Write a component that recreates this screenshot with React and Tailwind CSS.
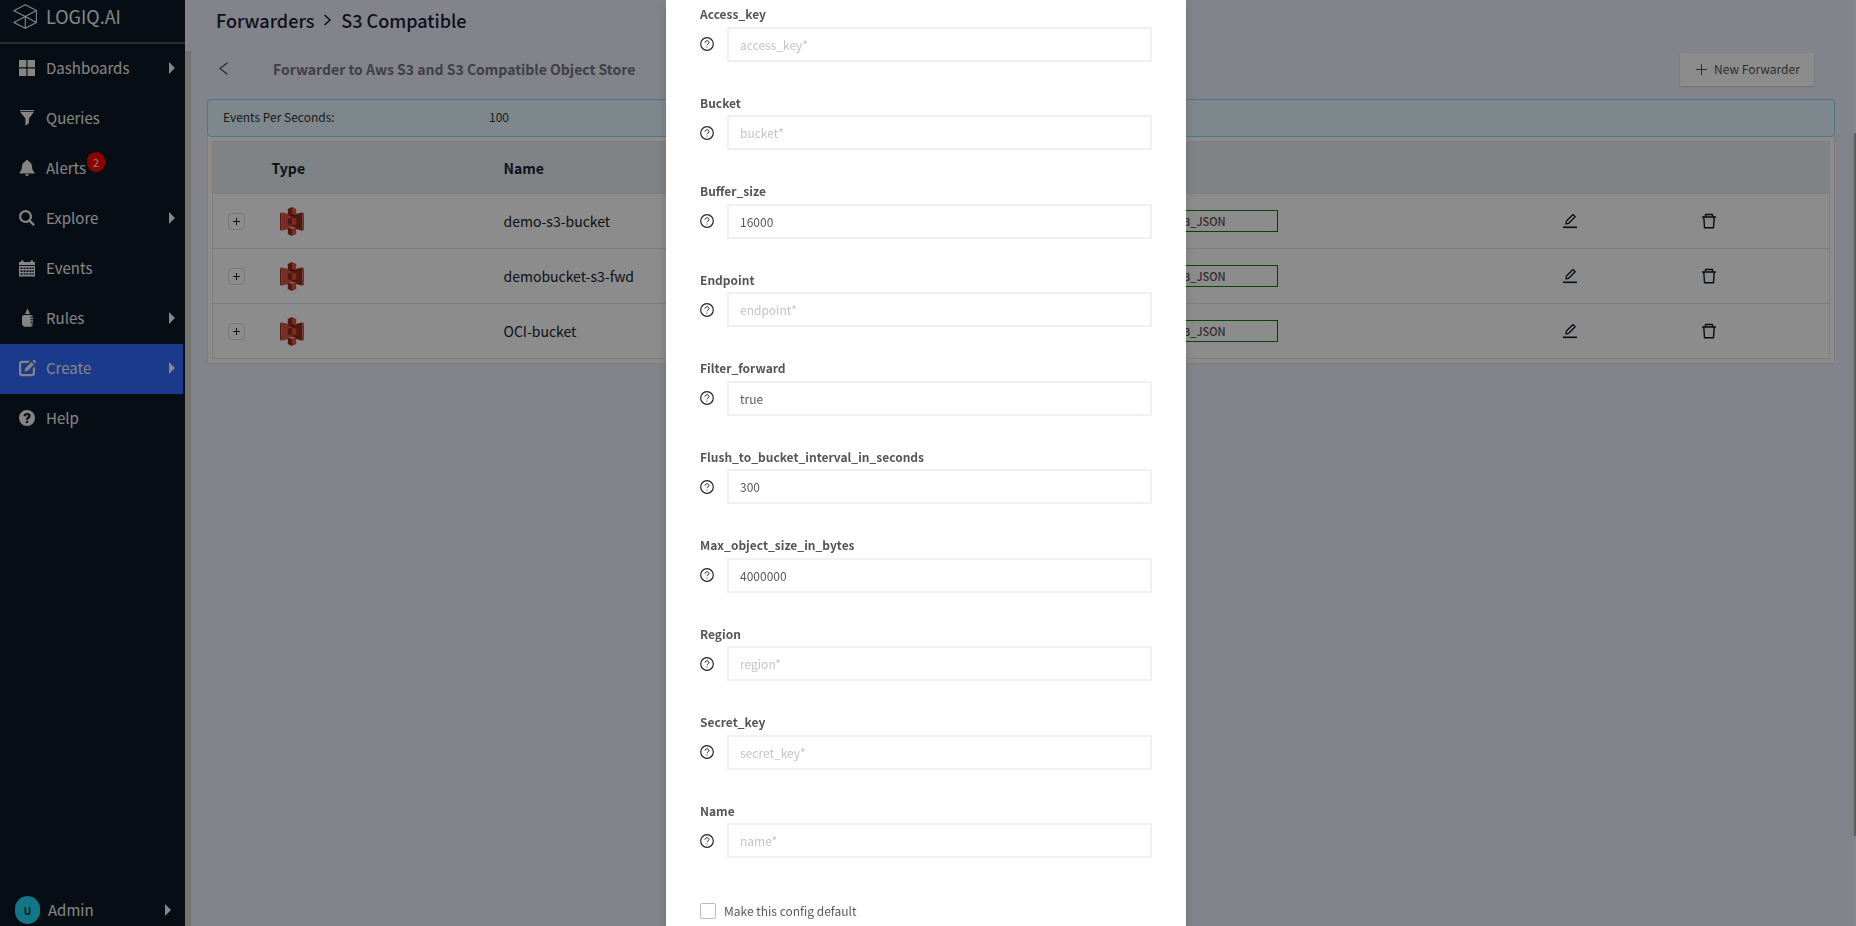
import React from "react";

const navItems = [
  { label: "Dashboards", icon: "grid", caret: true },
  { label: "Queries", icon: "funnel" },
  { label: "Alerts", icon: "bell", badge: 2 },
  { label: "Explore", icon: "search", caret: true },
  { label: "Events", icon: "calendar" },
  { label: "Rules", icon: "bottle", caret: true },
  { label: "Create", icon: "edit", caret: true, active: true },
  { label: "Help", icon: "help" },
];

const rows = ["demo-s3-bucket", "demobucket-s3-fwd", "OCI-bucket"];

const fields = [
  { name: "access_key" },
  { name: "bucket" },
  { name: "buffer_size", value: "16000" },
  { name: "endpoint" },
  { name: "filter_forward", value: "true" },
  { name: "flush_to_bucket_interval_in_seconds", value: "300" },
  { name: "max_object_size_in_bytes", value: "4000000" },
  { name: "region" },
  { name: "secret_key" },
  { name: "name" },
];

const glyphs = {
  grid: (
    <path d="M0 0h7.3v7.3H0zM8.5 0H16v7.3H8.5zM0 8.5h7.3V16H0zM8.5 8.5H16V16H8.5z" />
  ),
  funnel: (
    <>
      <path d="M1 0h14v1.2H1z" />
      <path d="M1.2 2h13.6L10 8.6V13l-3.6 3V8.6z" />
    </>
  ),
  bell: (
    <path d="M8 0c.8 0 1.3.6 1.3 1.3C11.8 2 12.8 4 13 6.5c.2 3 .9 4.500 2.500 6v1H.5v-1C2 11 2.800 9.500 3 6.500 3.200 4 4.300 2 6.700 1.300 6.700.6 7.200 0 8 0zM6.200 14.200h3.600c0 1-.8 1.800-1.800 1.800s-1.800-.8-1.800-1.800z" />
  ),
  search: (
    <path
      fillRule="evenodd"
      d="M6.500 0a6.500 6.500 0 0 1 5.300 10.200l4.200 4.200-1.700 1.700-4.200-4.200A6.500 6.500 0 1 1 6.500 0zm0 2.200a4.300 4.300 0 1 0 0 8.600 4.300 4.300 0 0 0 0-8.600z"
    />
  ),
  calendar: (
    <path
      fillRule="evenodd"
      d="M0 2h2V.5h2.500V2h7V.5H14V2h2v3H0zM0 6h16v10.500H0zM1.500 7.500v1.600h2V7.500zm3 0v1.600h2V7.500zm3 0v1.600h2V7.500zm3 0v1.600h2V7.500zM13.300 7.500v1.600h1.500V7.500zM1.500 10.300v1.600h2v-1.600zm3 0v1.600h2v-1.600zm3 0v1.600h2v-1.600zm3 0v1.600h2v-1.600zm2.800 0v1.600h1.500v-1.600zM1.500 13.200v1.600h2v-1.600zm3 0v1.600h2v-1.600zm3 0v1.600h2v-1.600zm3 0v1.600h2v-1.600zm2.800 0v1.600h1.500v-1.600z"
    />
  ),
  bottle: (
    <path d="M8.500-1.500 11 4H6zM5.300 5h6.200c1.400 0 2.200.8 2.400 1.700h-2.600v1h2.800v1.500h-2.800v1h2.800v1.500h-2.800v1h2.800v1h-1.800v1h1.600c-.3 1.200-1.100 2-2.400 2H5.300C4 15.700 3 14.700 3 13.400V7.300C3 6 4 5 5.300 5z" />
  ),
  edit: (
    <>
      <path
        fillRule="evenodd"
        d="M3 .8h8L9 3H3.200c-.6 0-1 .4-1 1v9c0 .6.4 1 1 1h9.600c.6 0 1-.4 1-1V8.500L16 6.300V13a3.200 3.200 0 0 1-3.200 3.200H3.200A3.200 3.200 0 0 1 0 13V4A3.200 3.200 0 0 1 3 .8z"
      />
      <path d="m5.500 11.500.8-3.300 6.200-6.100 2.400 2.400-6.100 6.200zM13.500 1.100l1.100-1.100h1l1.300 1.200v1l-1 1.200z" />
    </>
  ),
  help: (
    <path
      fillRule="evenodd"
      d="M8 0a8 8 0 1 1 0 16A8 8 0 0 1 8 0zm.2 3C6 3 4.800 4 4.400 6.100l2.300.5c.2-1 .6-1.500 1.300-1.500.6 0 1 .4 1 .9 0 1.200-2.200 1.400-2.200 3.400v.3h2.400c0-1.300 2.500-1.700 2.500-4C11.700 4.100 10.300 3 8.200 3zM8 10.700a1.300 1.300 0 1 0 0 2.600 1.300 1.300 0 0 0 0-2.600z"
    />
  ),
};

function NavGlyph({ name }) {
  return (
    <svg viewBox="0 0 16 16" className="size-4 shrink-0 overflow-visible" fill="currentColor" aria-hidden="true">
      {glyphs[name]}
    </svg>
  );
}

function Caret() {
  return (
    <svg viewBox="0 0 6 12" className="h-3 w-[6px] shrink-0" fill="currentColor" aria-hidden="true">
      <path d="M0 0l6 6-6 6z" />
    </svg>
  );
}

function Sidebar() {
  return (
    <aside className="flex w-[185px] shrink-0 flex-col bg-[#0e1925] text-[#f2f2f2]">
      <a href="#home" className="flex h-11 items-center gap-[9px] border-b-2 border-[#46535c] pb-[10px] pl-[13px]">
        <svg
          viewBox="0 0 24 25"
          className="h-[25px] w-6"
          fill="none"
          stroke="currentColor"
          strokeWidth="1.100"
          strokeLinejoin="round"
          aria-hidden="true"
        >
          <path d="M12.300.8 23.400 6.500v12L12.300 24.300.8 18.500l11.500-6L.8 6.700zM12.300 12.500l11.100-6M12.300 12.500v11.800M12.300 12.500l11.100 6" />
        </svg>
        <span className="text-lg leading-6">LOGIQ.AI</span>
      </a>
      <nav className="flex flex-1 flex-col pr-[2px]">
        {navItems.map((item) => (
          <a
            key={item.label}
            href={`#${item.label.toLowerCase()}`}
            className={`flex h-[50px] items-center pr-2 pb-[2px] pl-[19px] ${item.active ? "bg-[#326afd]" : ""}`}
          >
            <NavGlyph name={item.icon} />
            <span className="relative ml-[11px] text-[15px] leading-6">
              {item.label}
              {item.badge && (
                <span className="absolute -top-1 left-full ml-px flex h-5 w-[18px] items-center justify-center rounded-full bg-[#ff0000] text-[11px] leading-none">
                  {item.badge}
                </span>
              )}
            </span>
            <span className="ml-auto">{item.caret && <Caret />}</span>
          </a>
        ))}
      </nav>
      <button type="button" className="flex h-8 items-center pr-[14px] pl-[15px]">
        <span className="flex h-7 w-[25px] items-center justify-center rounded-full bg-[#20d8f4] text-[10px] font-bold text-[#0e1925]">
          U
        </span>
        <span className="ml-2 text-[15px] leading-6">Admin</span>
        <span className="ml-auto">
          <Caret />
        </span>
      </button>
    </aside>
  );
}

function S3Icon() {
  return (
    <svg viewBox="0 0 24 29" className="h-[29px] w-6" aria-hidden="true">
      <path d="M0 6.500 1.500 5.300v18.400L0 22.700z" fill="#8c3123" />
      <path d="M1.500 5.300 12 8v13L1.500 23.700z" fill="#e05243" />
      <path d="M12 8l10.500-2.700v18.400L12 21z" fill="#8c3123" />
      <path d="M22.500 5.300 24 6.500v16.200l-1.500 1z" fill="#e05243" />
      <path d="M12 0 7.800 2.100v5.300L12 8.500z" fill="#8c3123" />
      <path d="M12 0l4.200 2.100v5.300L12 8.500z" fill="#e05243" />
      <path d="M7.800 11.400 12 10.900v7.200l-4.200-.5z" fill="#8c3123" />
      <path d="m12 10.900 4.200.5v6.200l-4.200.5z" fill="#e05243" />
      <path d="M7.800 8.300 12 7.500l4.200.8L12 9.400z" fill="#5e1f18" />
      <path d="M7.800 20.700l4.200-1 4.200 1-4.200 1.100z" fill="#f2b0a9" />
      <path d="M7.800 20.700 12 21.800V29l-4.200-2.100z" fill="#8c3123" />
      <path d="m12 21.800 4.200-1.100v6.200L12 29z" fill="#e05243" />
    </svg>
  );
}

function PencilIcon() {
  return (
    <svg viewBox="0 0 16 16" className="size-4" fill="none" stroke="#0e1925" strokeWidth="1.300" aria-hidden="true">
      <path d="M4 10.800 4.400 8 11 1.500l2.200 2.200-6.500 6.600z" strokeLinejoin="round" />
      <path d="M1 14.300h14" strokeWidth="1.600" />
    </svg>
  );
}

function TrashIcon() {
  return (
    <svg viewBox="0 0 16 16" className="size-4" fill="none" stroke="#0e1925" strokeWidth="1.400" aria-hidden="true">
      <path d="M1 4h14M4.500 4V1.500h7V4M2.800 4l.7 10.700h9L13.200 4" strokeLinejoin="round" />
    </svg>
  );
}

function HelpCircle() {
  return (
    <svg viewBox="0 0 14 14" className="size-[14px]" fill="none" stroke="#262626" aria-hidden="true">
      <circle cx="7" cy="7" r="6.300" strokeWidth="1.200" />
      <path d="M5 5.700C5 4.500 5.900 3.800 7 3.800s2 .7 2 1.800c0 1.200-2 1.300-2 2.600" strokeWidth="1" />
      <circle cx="7" cy="10" r=".6" fill="#262626" stroke="none" />
    </svg>
  );
}

function ForwarderTable() {
  return (
    <table className="w-full table-fixed border-collapse border border-[#e8e8e8] text-sm leading-6 text-[#17222e]">
      <colgroup>
        <col className="w-[43px]" />
        <col className="w-[232px]" />
        <col />
        <col className="w-[436px]" />
        <col className="w-[139px]" />
        <col className="w-[145px]" />
      </colgroup>
      <thead>
        <tr className="h-[52px] border-b border-[#e8e8e8] bg-[#e7eef2] text-left">
          <td />
          <th className="px-4 font-bold">Type</th>
          <th className="px-4 font-bold">Name</th>
          <td />
          <td />
          <td />
        </tr>
      </thead>
      <tbody>
        {rows.map((name) => (
          <tr key={name} className="h-[55px] border-b border-[#e4e4e4]">
            <td className="pl-[15px]">
              <button
                type="button"
                aria-label={`Expand ${name}`}
                className="flex size-[17px] items-center justify-center rounded-sm border border-[#dadada]"
              >
                <svg viewBox="0 0 9 9" className="size-[9px]" stroke="#17222e" aria-hidden="true">
                  <path d="M4.500 1v7M1 4.500h7" />
                </svg>
              </button>
            </td>
            <td className="px-6">
              <S3Icon />
            </td>
            <td className="px-4">{name}</td>
            <td className="px-4">
              <span className="flex h-[22px] w-[152px] items-center justify-center border border-[#008000] text-[11px] font-medium text-[#555555]">
                S3_JSON
              </span>
            </td>
            <td className="px-4">
              <button type="button" aria-label={`Edit ${name}`} className="flex">
                <PencilIcon />
              </button>
            </td>
            <td className="px-4">
              <button type="button" aria-label={`Delete ${name}`} className="flex">
                <TrashIcon />
              </button>
            </td>
          </tr>
        ))}
      </tbody>
    </table>
  );
}

function Page() {
  return (
    <div className="flex min-w-0 flex-1 flex-col bg-[#efeffd]">
      <header className="flex h-[51px] shrink-0 items-start pt-[6px] pl-[31px]">
        <h1 className="flex items-center gap-[9px] text-lg leading-7 font-medium text-[#17222e]">
          <a href="#forwarders">Forwarders</a>
          <svg viewBox="0 0 9 12" className="h-3 w-[9px]" fill="none" stroke="#17222e" strokeWidth="1.600" aria-hidden="true">
            <path d="m1.500 1 5.500 5-5.500 5" />
          </svg>
          <span>S3 Compatible</span>
        </h1>
      </header>
      <div className="flex flex-1">
        <div className="w-[6px] shrink-0 bg-[#d6d4cc]" />
        <main className="min-w-0 flex-1 pr-[21px] pl-4">
          <div className="flex h-12 items-start pr-[21px]">
            <button
              type="button"
              aria-label="Back"
              className="flex h-[35px] w-[33px] items-center justify-center border border-[#eeedf6]"
            >
              <svg viewBox="0 0 9 13" className="h-[13px] w-[9px]" fill="none" stroke="#4a4a4a" strokeWidth="1.200" aria-hidden="true">
                <path d="M8.500.8 1 6.500l7.500 5.700" />
              </svg>
            </button>
            <h2 className="mt-1 ml-[33px] text-sm leading-7 font-bold text-[#6f7680]">
              Forwarder to Aws S3 and S3 Compatible Object Store
            </h2>
            <button
              type="button"
              className="mt-[2px] ml-auto flex h-[33px] w-[134px] items-center gap-[7px] bg-white pb-px pl-4 text-xs text-[#555555] shadow-sm"
            >
              <svg viewBox="0 0 11 11" className="size-[11px]" stroke="#555555" aria-hidden="true">
                <path d="M5.500 0v11M0 5.500h11" />
              </svg>
              New Forwarder
            </button>
          </div>
          <section className="border border-[#e2e2e2] bg-white">
            <div className="-mx-px -mt-px flex h-[38px] items-center rounded-sm border border-[#91d5ff] bg-[#e6f7ff] px-[15px] pb-[2px] text-xs text-[#333333]">
              <span className="w-[266px]">Events Per Seconds:</span>
              <span>100</span>
            </div>
            <div className="p-1">
              <ForwarderTable />
            </div>
          </section>
        </main>
      </div>
    </div>
  );
}

function Field({ name, value }) {
  return (
    <div className="pb-8 text-[13px] leading-normal">
      <label htmlFor={name} className="text-xs font-bold text-[#555555] capitalize">
        {name}
      </label>
      <div className="mt-[3px] -mb-px flex items-center justify-between">
        <HelpCircle />
        <input
          id={name}
          type="text"
          defaultValue={value}
          placeholder={`${name}*`}
          className="h-[35px] w-[425px] border-2 border-[#f0f0f7] px-[11px] text-xs text-[#595959] outline-none placeholder:text-[#c4c4c4]"
        />
      </div>
    </div>
  );
}

function ForwarderDialog() {
  return (
    <div className="fixed inset-0 flex items-start overflow-hidden bg-black/45 pr-1">
      <form
        aria-label="New forwarder"
        className="mx-auto w-[520px] bg-white px-[34px] pt-1 pb-8 shadow-[0_4px_12px_rgba(0,0,0,0.15)]"
      >
        {fields.map((field) => (
          <Field key={field.name} {...field} />
        ))}
        <label className="mt-3 flex items-center gap-2 text-xs leading-5 text-[#595959]">
          <input type="checkbox" className="size-4 appearance-none rounded-xs border border-[#b4bcc4]" />
          Make this config default
        </label>
      </form>
    </div>
  );
}

export default function App() {
  return (
    <div className="flex h-screen overflow-hidden font-['Noto_Sans_CJK_SC','Noto_Sans',sans-serif]">
      <Sidebar />
      <Page />
      <ForwarderDialog />
      <div className="fixed inset-y-0 right-0 w-[3px] bg-[#87868a]">
        <div className="mt-[133px] h-[703px] border-l border-[#61829b] bg-[#5d5f60]" />
      </div>
    </div>
  );
}
